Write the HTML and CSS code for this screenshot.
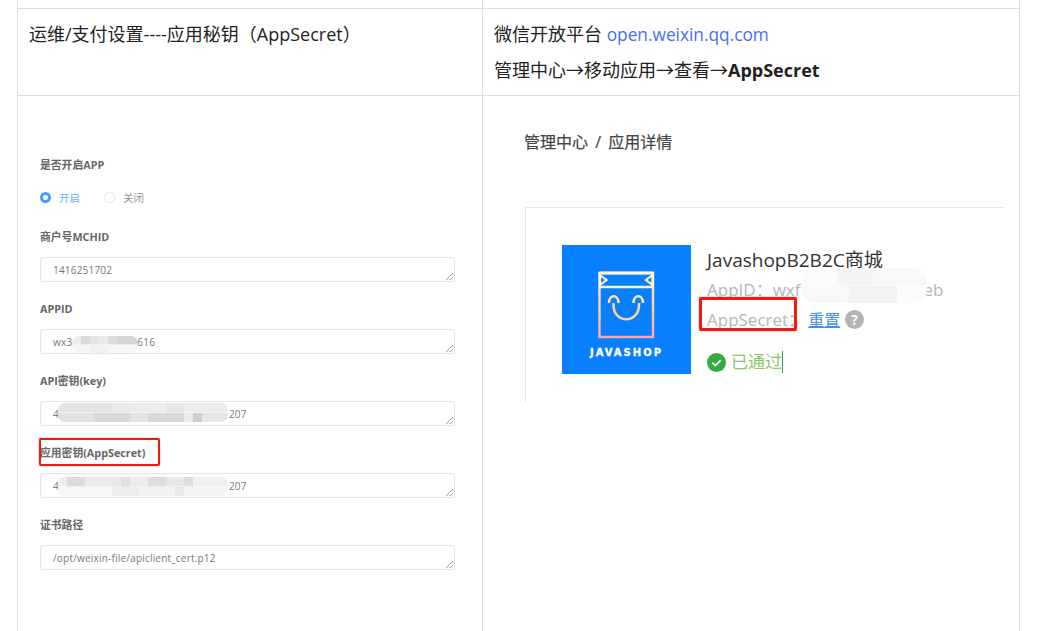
FILE: index.html
```html
<!DOCTYPE html>
<html lang="zh-CN">
<head>
<meta charset="utf-8">
<title>AppSecret</title>
<link rel="stylesheet" href="styles.css">
</head>
<body>
<div class="table">
  <div class="cell stub"></div>
  <div class="cell stub"></div>
  <div class="cell head"><p>运维/支付设置----应用秘钥（AppSecret）</p></div>
  <div class="cell head">
    <p>微信开放平台 <a class="link" href="#">open.weixin.qq.com</a></p>
    <p>管理中心→移动应用→查看→<b>AppSecret</b></p>
  </div>
  <div class="cell shot-left">
    <form class="form">
      <div class="label first">是否开启APP</div>
      <div class="radios">
        <span class="radio on"></span><span class="radio-text on">开启</span>
        <span class="radio"></span><span class="radio-text">关闭</span>
      </div>
      <div class="label">商户号MCHID</div>
      <div class="field">1416251702<i class="grip"></i></div>
      <div class="label">APPID</div>
      <div class="field">wx3<span class="gap gap-a"></span>616<i class="grip"></i><span class="patch patch-a"></span></div>
      <div class="label">API密钥(key)</div>
      <div class="field">4<span class="gap gap-b"></span>207<i class="grip"></i><span class="patch patch-b"></span></div>
      <div class="label highlighted">应用密钥(AppSecret)<span class="redbox redbox-label"></span></div>
      <div class="field">4<span class="gap gap-b"></span>207<i class="grip"></i><span class="patch patch-c"></span></div>
      <div class="label">证书路径</div>
      <div class="field">/opt/weixin-file/apiclient_cert.p12<i class="grip"></i></div>
    </form>
  </div>
  <div class="cell shot-right">
    <div class="crumb">管理中心 / 应用详情</div>
    <div class="card">
      <svg class="logo" viewBox="0 0 129 129" aria-hidden="true">
        <defs>
          <linearGradient id="bag" gradientUnits="userSpaceOnUse" x1="0" y1="27" x2="0" y2="93">
            <stop offset="0" stop-color="#fdf6c8"/>
            <stop offset=".5" stop-color="#fbd89a"/>
            <stop offset="1" stop-color="#f5a7b4"/>
          </linearGradient>
        </defs>
        <rect width="129" height="129" fill="#087ffc"/>
        <path d="M37.5 28H91V92H37.5Z" fill="none" stroke="url(#bag)" stroke-width="2.4"/>
        <path d="M37.5 42H91" fill="none" stroke="#fdf3c0" stroke-width="2.4"/>
        <path d="M37.5 28H91" fill="none" stroke="#fff8d8" stroke-width="2.8"/>
        <path d="M38 30L44.5 35L38 40Z" fill="none" stroke="#fdf6d4" stroke-width="2.2"/>
        <path d="M90.5 30L84 35L90.5 40Z" fill="none" stroke="#fdf6d4" stroke-width="2.2"/>
        <path d="M51.5 58V60C51.5 79 77 79 77 60V58" fill="none" stroke="#fbd298" stroke-width="2.6"/>
        <path d="M47 58C47 49 56.5 49 56.5 58M71.5 58C71.5 49 81 49 81 58" fill="none" stroke="#fde6a4" stroke-width="2.6"/>
        <text class="logo-text" x="64.5" y="111" text-anchor="middle">JAVASHOP</text>
      </svg>
      <div class="info">
        <div class="app-name">JavashopB2B2C商城</div>
        <div class="app-line">AppID：wxf<span class="gap gap-d"></span>eb<span class="patch patch-d"></span></div>
        <div class="app-line secret">AppSecret：<a class="reset" href="#">重置</a><span class="help">?</span><span class="redbox redbox-secret"></span></div>
        <div class="status">
          <svg class="ok" viewBox="0 0 18 18" aria-hidden="true"><circle cx="9" cy="9" r="9" fill="#36ab3c"/><path d="M5 9.2L8 12L13 6.8" fill="none" stroke="#fff" stroke-width="1.6"/></svg>
          <span class="ok-text">已通过</span><span class="caret"></span>
        </div>
      </div>
    </div>
  </div>
</div>
</body>
</html>
```
FILE: styles.css
```css
* { box-sizing: border-box; }
html, body { margin: 0; height: 631px; overflow: hidden; background: #fff; }
body {
  padding-left: 17px;
  font-family: "Open Sans", "Noto Sans CJK SC", sans-serif;
  color: #222;
}
.table {
  width: 1003px;
  height: 631px;
  display: grid;
  grid-template-columns: 465px 1fr;
  grid-template-rows: 9px 87px 1fr;
  border-left: 1px solid #ddd;
  border-right: 1px solid #ddd;
}
.cell { border-bottom: 1px solid #ddd; min-width: 0; }
.cell:nth-child(odd) { border-right: 1px solid #ddd; }
.head { padding: 15px 11px 0; font-size: 18px; line-height: 20px; }
.head p { margin: 0 0 15px; }
.head b { font-weight: 700; }
.link { color: #4a6cf7; font-size: 17.3px; text-decoration: none; }

.shot-left, .shot-right { border-bottom: 0; }
.shot-left { padding: 62px 27px 0 22px; }
.form { font-size: 10px; color: #606266; }
.label { position: relative; font-size: 10.8px; font-weight: 700; line-height: 14px; margin: 20px 0 13px; color: #666; }
.label.first { margin-top: 0; margin-bottom: 0; }
.radios { display: flex; align-items: center; height: 14px; margin-top: 18px; margin-bottom: 26px; font-size: 10.5px; }
.radio { width: 11px; height: 11px; border-radius: 50%; border: 1px solid #e4e7ed; margin-right: 8px; }
.radio.on { border: 3px solid #409eff; background: #fff; }
.radio-text { color: #999; margin-right: 24px; }
.radio-text.on { color: #66b1ff; }
.field {
  position: relative;
  height: 25px;
  padding: 0 12px;
  border: 1px solid #e4e4ee;
  border-radius: 3px;
  font-size: 10px;
  line-height: 24px;
  color: #777;
  letter-spacing: .2px;
}
.grip {
  position: absolute; right: 1px; bottom: 1px; width: 7px; height: 7px;
  background: linear-gradient(135deg, transparent 45%, #999 45%, #999 55%, transparent 55%, transparent 72%, #999 72%, #999 82%, transparent 82%);
}
.gap { display: inline-block; }
.gap-a { width: 65px; }
.gap-b { width: 170px; }
.gap-d { width: 123px; }
.patch {
  position: absolute; border-radius: 7px;
  background-repeat: no-repeat;
  background-size: 100% 50%;
  background-position: top, bottom;
  filter: blur(.7px);
}
.patch-a {
  left: 31px; top: 6px; width: 66px; height: 17px;
  background-image:
    linear-gradient(90deg, #ececec 0 9px, #dadada 9px 18px, #e4e4e4 18px 27px, #e9e9e9 27px 36px, #dcdcdc 36px 45px, #d6d6d6 45px 66px),
    linear-gradient(90deg, #f6f6f6 0 18px, #f1f1f1 18px 36px, #f7f7f7 36px 66px);
}
.patch-b {
  left: 17px; top: 1px; width: 170px; height: 19px;
  background-image:
    linear-gradient(90deg, #e4e4e4 0 54px, #e9e9e9 54px 72px, #ececec 72px 108px, #e6e6e6 108px 126px, #ececec 126px 170px),
    linear-gradient(90deg, #e2e2e2 0 36px, #d8d8d8 36px 72px, #e4e4e4 72px 90px, #d8d8d8 90px 126px, #eaeaea 126px 135px, #cfcfcf 135px 144px, #e6e6e6 144px 170px);
}
.patch-c {
  left: 17px; top: 3px; width: 170px; height: 19px;
  background-image:
    linear-gradient(90deg, #ededed 0 9px, #dcdcdc 9px 27px, #eaeaea 27px 63px, #e0e0e0 63px 72px, #ececec 72px 90px, #dedede 90px 108px, #e8e8e8 108px 126px, #dedede 126px 135px, #f0f0f0 135px 170px),
    linear-gradient(90deg, #f6f6f6 0 54px, #ececec 54px 81px, #f2f2f2 81px 117px, #e8e8e8 117px 126px, #f4f4f4 126px 170px);
}
.patch-d {
  left: 94px; top: -10px; width: 126px; height: 35px; border-radius: 14px;
  background-image:
    linear-gradient(90deg, #fbfbfb 0 36px, #f5f5f5 36px 72px, #f8f8f8 72px 126px),
    linear-gradient(90deg, #f8f8f8 0 48px, #f3f3f3 48px 96px, #fbfbfb 96px 126px);
}
.redbox { position: absolute; border: 2px solid #f01a12; border-radius: 2px; pointer-events: none; box-shadow: 0 0 1px #f01a12; }
.redbox-label { left: -1px; top: -8px; width: 121px; height: 28px; }
.redbox-secret { left: -8px; top: -11px; width: 98px; height: 34px; border-width: 3px; }

.shot-right { padding: 36px 15px 0 42px; }
.crumb { margin-left: -1px; font-size: 16px; line-height: 20px; word-spacing: 3px; color: #444; -webkit-text-stroke: .2px #444; }
.card {
  display: flex;
  margin-top: 55px;
  height: 195px;
  padding: 37px 0 0 36px;
  border-top: 1px solid #e6e6e6;
  border-left: 1px solid #e6e6e6;
}
.logo { width: 129px; height: 129px; flex: none; }
.logo-text { font-family: "DejaVu Sans", sans-serif; font-size: 10px; font-weight: 700; letter-spacing: 2px; fill: #fff; stroke: #fff; stroke-width: .3px; }
.info { margin-left: 16px; }
.app-name { font-size: 19px; line-height: 24px; margin-top: 3px; color: #333; }
.app-line { position: relative; font-size: 17px; line-height: 24px; color: #b5b5b5; margin-top: 6px; white-space: nowrap; }
.secret { margin-top: 6px; }
.reset { color: #3d8ef0; font-size: 16px; margin-left: 3px; }
.help { display: inline-block; width: 19px; height: 19px; margin-left: 5px; border-radius: 50%; background: #b5b5b5; color: #fff; font-size: 14px; font-weight: 700; line-height: 19px; text-align: center; vertical-align: 1px; }
.status { display: flex; align-items: center; margin-top: 18px; height: 24px; }
.ok { width: 19px; height: 19px; }
.ok-text { margin-left: 5px; font-size: 17px; line-height: 22px; color: #8cc56b; }
.caret { width: 1px; height: 22px; background: #3c9a50; }
```
